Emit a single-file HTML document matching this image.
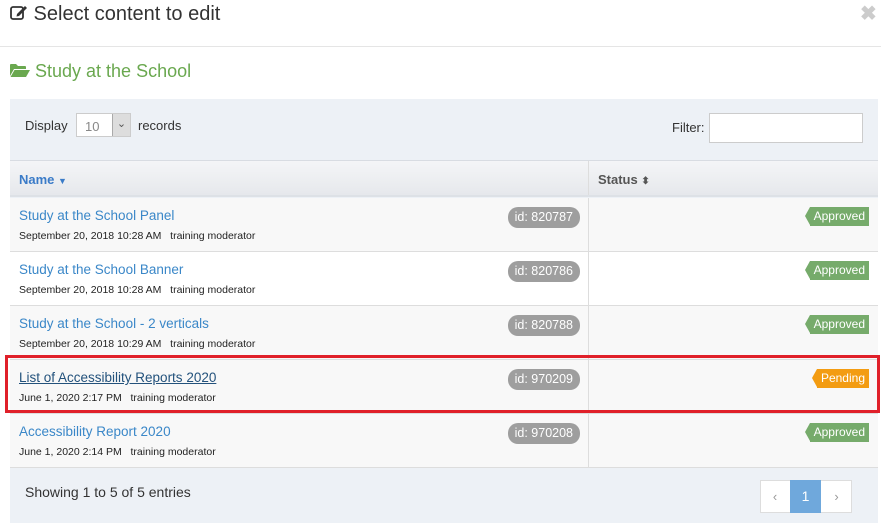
<!DOCTYPE html>
<html><head><meta charset="utf-8"><style>
*{box-sizing:border-box;margin:0;padding:0}
body{width:881px;height:523px;overflow:hidden;background:#fff;font-family:"Liberation Sans",Arial,sans-serif;position:relative;color:#333}
.a{position:absolute}
.hdr{left:0;top:0;width:881px;height:47px;border-bottom:1px solid #e5e5e5}
.title{left:10px;top:3px;font-size:20px;color:#333}
.x{left:860px;top:1px;font-size:20px;color:#ccc;font-weight:bold}
.sec{left:10px;top:61px;font-size:18px;color:#6aa84f}
.panel{left:10px;top:99px;width:868px;height:424px;background:#edf1f6}
.lbl{font-size:13px;color:#333}
.sel{left:76px;top:113px;width:55px;height:24px;background:#fff;border:1px solid #ccc}
.filter{left:709px;top:113px;width:154px;height:30px;background:#fff;border:1px solid #ccc}
.th{left:10px;top:160px;width:868px;height:37px;background:linear-gradient(#f4f5f7,#e6e8ec);border-top:1px solid #d8dce2;border-bottom:2px solid #dde1e6}
.row{left:10px;width:868px;height:54px;border-bottom:1px solid #ddd;background:#fff}
.row.g{background:#f8f8f8}
.vl{position:absolute;left:578px;top:0;bottom:0;border-left:1px solid #ddd}
.name{position:absolute;left:9px;top:10px;font-size:13.5px;color:#3a87c8}
.meta{position:absolute;left:9px;top:32px;font-size:10.5px;color:#222}
.id{position:absolute;right:298px;top:9px;height:21px;line-height:21px;padding:0 7px;background:#9e9e9e;color:#fff;border-radius:10px;font-size:12.5px}
.st{position:absolute;right:9px;top:9px;height:19px;line-height:19px;padding:0 4px 0 4px;color:#fff;font-size:12px;background:#76ab6b}
.st:before{content:"";position:absolute;left:-5px;top:0;border-right:5px solid #76ab6b;border-top:9.5px solid transparent;border-bottom:9.5px solid transparent}
.st.p{background:#f39c12}.st.p:before{border-right-color:#f39c12}
</style></head><body>
<div class="a hdr"></div>
<div class="a title"><svg width="18" height="17" viewBox="0 0 18 17" style="vertical-align:-1px"><rect x="1" y="3" width="12" height="12" rx="2" fill="none" stroke="#333" stroke-width="1.8"/><path d="M7 10 L15 2 L17 4 L9 12 L6.5 12.5 Z" fill="#333"/></svg> Select content to edit</div>
<div class="a x">✖</div>
<div class="a sec"><svg width="20" height="15" viewBox="0 0 20 15" style="vertical-align:-1px"><path d="M0 2 Q0 1 1 1 H6 L8 3 H15 Q16 3 16 4 V6 H4 L0 13 Z" fill="#6aa84f"/><path d="M4.5 7 H20 L16 14 H0.5 Z" fill="#6aa84f"/></svg> Study at the School</div>
<div class="a panel"></div>
<div class="a lbl" style="left:25px;top:118px">Display</div>
<div class="a sel"><span style="position:absolute;left:8px;top:5px;font-size:13px;color:#888">10</span><span style="position:absolute;right:0;top:0;width:18px;height:22px;background:#ddd;border-left:1px solid #aaa;font-size:11px;text-align:center;line-height:20px;color:#555">⌄</span></div>
<div class="a lbl" style="left:138px;top:118px">records</div>
<div class="a lbl" style="left:672px;top:120px">Filter:</div>
<div class="a filter"></div>
<div class="a th"><span style="position:absolute;left:9px;top:11px;font-size:13px;font-weight:bold;color:#3a7bc8">Name <span style="font-size:9px">▼</span></span><div class="vl"></div><span style="position:absolute;left:588px;top:11px;font-size:13px;font-weight:bold;color:#555">Status <span style="font-size:10px">⬍</span></span></div>

<div class="a row g" style="top:198px"><div class="vl"></div><div class="name">Study at the School Panel</div><div class="meta">September 20, 2018 10:28 AM&nbsp;&nbsp; training moderator</div><div class="id">id: 820787</div><div class="st">Approved</div></div>
<div class="a row" style="top:252px"><div class="vl"></div><div class="name">Study at the School Banner</div><div class="meta">September 20, 2018 10:28 AM&nbsp;&nbsp; training moderator</div><div class="id">id: 820786</div><div class="st">Approved</div></div>
<div class="a row g" style="top:306px"><div class="vl"></div><div class="name">Study at the School - 2 verticals</div><div class="meta">September 20, 2018 10:29 AM&nbsp;&nbsp; training moderator</div><div class="id">id: 820788</div><div class="st">Approved</div></div>
<div class="a row g" style="top:360px"><div class="vl"></div><div class="name" style="color:#23527c;text-decoration:underline">List of Accessibility Reports 2020</div><div class="meta">June 1, 2020 2:17 PM&nbsp;&nbsp; training moderator</div><div class="id">id: 970209</div><div class="st p">Pending</div></div>
<div class="a row g" style="top:414px"><div class="vl"></div><div class="name">Accessibility Report 2020</div><div class="meta">June 1, 2020 2:14 PM&nbsp;&nbsp; training moderator</div><div class="id">id: 970208</div><div class="st">Approved</div></div>
<div class="a" style="left:5px;top:355px;width:875px;height:58px;border:3px solid #e0202a"></div>

<div class="a" style="left:25px;top:484px;font-size:14px;color:#333">Showing 1 to 5 of 5 entries</div>
<div class="a" style="left:760px;top:480px;width:92px;height:33px;background:#fff;border:1px solid #ddd"></div>
<div class="a" style="left:760px;top:480px;width:30px;height:33px;text-align:center;line-height:33px;color:#999;font-size:13px">‹</div>
<div class="a" style="left:790px;top:480px;width:31px;height:33px;background:#6fa8dc;color:#fff;text-align:center;line-height:33px;font-size:14px">1</div>
<div class="a" style="left:821px;top:480px;width:31px;height:33px;text-align:center;line-height:33px;color:#999;font-size:13px">›</div>
</body></html>
